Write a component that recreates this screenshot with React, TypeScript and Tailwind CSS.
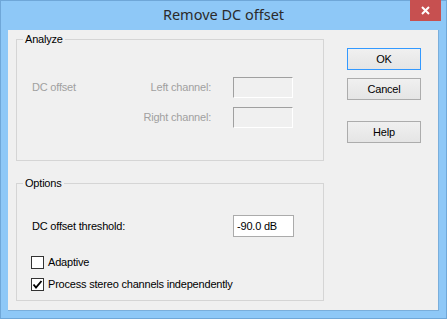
import type { ReactNode } from "react"

const ui = "font-['Liberation_Sans',Arial,sans-serif] text-[11px] leading-[13px] tracking-[-0.2px]"

function GroupBox({ label, className, children }: { label: string; className?: string; children: ReactNode }) {
  return (
    <div className={`relative border border-[#d5d5d5] ${className ?? ""}`}>
      <span className="absolute -top-[7px] left-[6px] bg-[#f0f0f0] px-[2px] text-black">{label}</span>
      {children}
    </div>
  )
}

function Button({ children, primary }: { children: ReactNode; primary?: boolean }) {
  return (
    <button
      className={`flex h-[22px] w-[74px] items-center justify-center border bg-gradient-to-b from-[#f0f0f0] to-[#e5e5e5] text-black ${
        primary ? "border-[#3399ff]" : "border-[#acacac]"
      }`}
    >
      {children}
    </button>
  )
}

function DisabledField() {
  return <div className="h-[21px] w-[60px] border-t border-l border-t-[#a0a0a0] border-l-[#a0a0a0] border-r border-b border-r-white border-b-white bg-[#f0f0f0]" />
}

function CheckBox({ checked, label }: { checked?: boolean; label: string }) {
  return (
    <div className="flex h-[13px] items-center">
      <div className="ml-[14px] flex h-[13px] w-[13px] items-center justify-center border border-[#333333] bg-white">
        {checked && (
          <svg width="11" height="11" viewBox="0 0 11 11">
            <path d="M1.5 5.5 L4 8.5 L9.5 2" fill="none" stroke="#000" strokeWidth="1.9" />
          </svg>
        )}
      </div>
      <span className="ml-[4px] text-black">{label}</span>
    </div>
  )
}

export default function App() {
  return (
    <div className={`flex h-[319px] w-[447px] flex-col border border-[#6fa7d8] bg-[#8ec8f7] ${ui}`}>
      {/* Title bar */}
      <div className="relative flex h-[29px] items-center justify-center pb-[3px]">
        <span className="font-['Noto_Sans',sans-serif] text-[14.5px] leading-[20px] tracking-normal text-[#2b2b2b]">
          Remove DC offset
        </span>
        <div className="absolute right-[5px] -top-[1px] flex h-[21px] w-[31px] items-center justify-center bg-[#c75050]">
          <svg width="9" height="9" viewBox="0 0 9 9">
            <path d="M1 1 L8 8 M8 1 L1 8" stroke="#fff" strokeWidth="2" />
          </svg>
        </div>
      </div>

      {/* Client area */}
      <div className="mx-[7px] mb-[7px] flex flex-1 border-r border-b border-[#7aaedb] bg-[#f0f0f0]">
        <div className="flex w-[316px] flex-col pl-[8px] pt-[9px]">
          <GroupBox label="Analyze" className="h-[122px]">
            <div className="flex flex-col gap-[9px] pt-[37px] text-[#a0a0a0]">
              <div className="flex items-center">
                <div className="flex w-[194px] justify-between pl-[15px]">
                  <span>DC offset</span>
                  <span>Left channel:</span>
                </div>
                <div className="ml-[22px]">
                  <DisabledField />
                </div>
              </div>
              <div className="flex items-center">
                <div className="flex w-[194px] justify-end">
                  <span>Right channel:</span>
                </div>
                <div className="ml-[22px]">
                  <DisabledField />
                </div>
              </div>
            </div>
          </GroupBox>

          <GroupBox label="Options" className="mt-[22px] h-[118px]">
            <div className="flex items-center pt-[31px]">
              <span className="w-[216px] pl-[15px] text-black">DC offset threshold:</span>
              <div className="flex h-[22px] w-[61px] items-center border border-[#ababab] bg-white pl-[3px] text-black">
                -90.0 dB
              </div>
            </div>
            <div className="mt-[19px] flex flex-col gap-[9px]">
              <CheckBox label="Adaptive" />
              <CheckBox checked label="Process stereo channels independently" />
            </div>
          </GroupBox>
        </div>

        <div className="ml-[23px] flex flex-col pt-[18px]">
          <Button primary>OK</Button>
          <div className="mt-[8px]">
            <Button>Cancel</Button>
          </div>
          <div className="mt-[21px]">
            <Button>Help</Button>
          </div>
        </div>
      </div>
    </div>
  )
}
